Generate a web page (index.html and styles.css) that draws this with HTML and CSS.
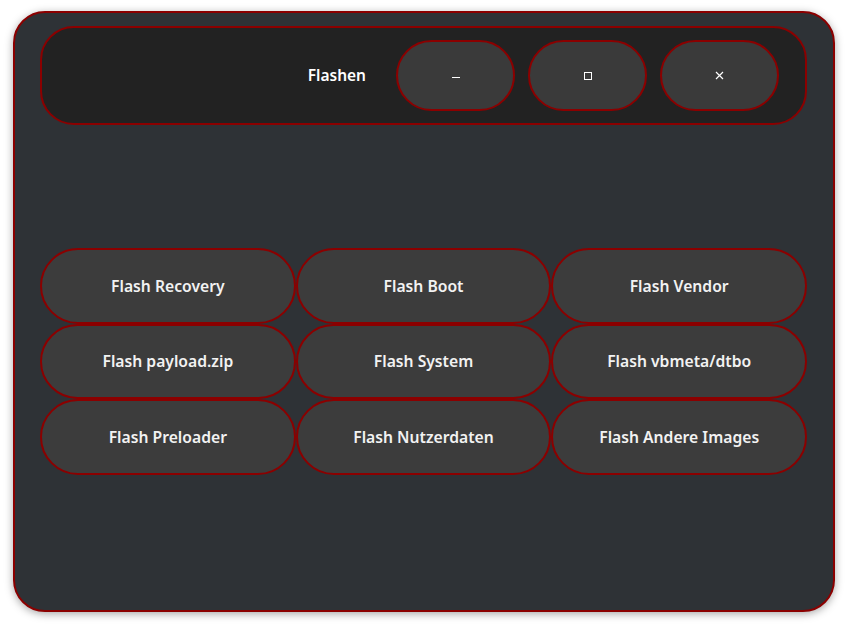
FILE: index.html
```html
<!DOCTYPE html>
<html>
<head>
<meta charset="utf-8">
<link rel="stylesheet" href="styles.css">
</head>
<body>
<div class="window">
  <div class="header">
    <div class="title">Flashen</div>
    <div class="controls">
      <button class="ctl"><span class="min"></span></button>
      <button class="ctl"><span class="max"></span></button>
      <button class="ctl"><svg class="close" width="9" height="9" viewBox="0 0 9 9"><path d="M1 1L8 8M8 1L1 8" stroke="#fff" stroke-width="1.2"/></svg></button>
    </div>
  </div>
  <div class="grid">
    <button class="btn">Flash Recovery</button>
    <button class="btn">Flash Boot</button>
    <button class="btn">Flash Vendor</button>
    <button class="btn">Flash payload.zip</button>
    <button class="btn">Flash System</button>
    <button class="btn">Flash vbmeta/dtbo</button>
    <button class="btn">Flash Preloader</button>
    <button class="btn">Flash Nutzerdaten</button>
    <button class="btn">Flash Andere Images</button>
  </div>
</div>
</body>
</html>
```

FILE: styles.css
```css
html, body {
  margin: 0;
  padding: 0;
  background: #ffffff;
}
body {
  font-family: "Noto Sans", "DejaVu Sans", sans-serif;
  width: 848px;
  height: 629px;
  overflow: hidden;
}
.window {
  box-sizing: border-box;
  margin: 11px 0 0 13px;
  width: 822px;
  height: 601px;
  background: #2e3236;
  border: 2px solid #8b0000;
  border-radius: 32px;
  box-shadow: 0 2px 8px rgba(0,0,0,0.35);
  padding: 13px 26px 0 25px;
}
.header {
  box-sizing: border-box;
  height: 99px;
  background: #222222;
  border: 2px solid #8b0000;
  border-radius: 34px;
  display: flex;
  align-items: center;
  justify-content: flex-end;
  padding: 0 26px 0 0;
}
.title {
  color: #ffffff;
  font-weight: 600;
  font-size: 15.5px;
  margin-right: 30px;
  margin-bottom: 2px;
}
.controls {
  display: flex;
  gap: 13px;
}
.ctl {
  box-sizing: border-box;
  width: 119px;
  height: 71px;
  background: #3a3a3a;
  border: 2px solid #8b0000;
  border-radius: 36px;
  display: flex;
  align-items: center;
  justify-content: center;
  padding: 0;
}
.min {
  display: block;
  width: 8px;
  height: 1px;
  background: #ffffff;
  margin-top: 4px;
}
.max {
  display: block;
  width: 6px;
  height: 6px;
  border: 1px solid #ffffff;
}
.grid {
  margin-top: 123px;
  display: grid;
  grid-template-columns: repeat(3, 1fr);
  grid-template-rows: repeat(3, 75.67px);
  gap: 0;
}
.btn {
  box-sizing: border-box;
  height: 100%;
  background: #3c3c3c;
  border: 2px solid #8b0000;
  border-radius: 38px;
  color: #f2f2f2;
  font-family: "Noto Sans", "DejaVu Sans", sans-serif;
  font-weight: 600;
  font-size: 15.7px;
  padding: 0;
}
```
